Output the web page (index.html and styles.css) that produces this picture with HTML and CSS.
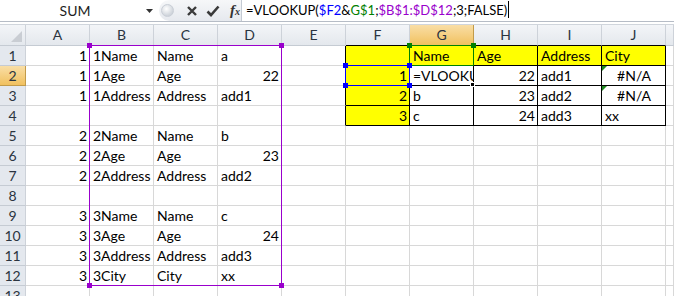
FILE: index.html
```html
<!DOCTYPE html>
<html lang="en">
<head>
    <meta charset="UTF-8">
    <title>Sheet1</title>
    <link rel="stylesheet" href="styles.css">
</head>
<body>
    <div class="formula-bar">
        <div class="name-box">
            <span class="name-text">SUM</span>
            <svg class="dd" width="7" height="4" viewBox="0 0 7 4"><path d="M0 0h7L3.5 4z" fill="#333"/></svg>
        </div>
        <div class="fx-buttons">
            <span class="grip"></span>
            <svg class="btn" width="12" height="12" viewBox="0 0 12 12"><path d="M2 2l8 8M10 2l-8 8" stroke="#3a3a3a" stroke-width="2.4"/></svg>
            <svg class="btn" width="14" height="12" viewBox="0 0 14 12"><path d="M1.5 6.5l3.5 3.5 7.5-8.5" stroke="#3a3a3a" stroke-width="2.6" fill="none"/></svg>
            <span class="fx">f<small>x</small></span>
        </div>
        <div class="formula">=VLOOKUP(<span class="ref-blue">$F2</span>&amp;<span class="ref-green">G$1</span>;<span class="ref-purple">$B$1:$D$12</span>;3;FALSE)<span class="caret"></span></div>
    </div>
    <div class="strip"></div>
    <div class="sheet" id="sheet">
        <!-- cells filled by script -->
        <div class="range purple"><i class="tl"></i><i class="tr"></i><i class="bl"></i><i class="br"></i></div>
        <div class="range green"><i class="tl"></i><i class="tr"></i></div>
        <div class="range blue"><i class="tl"></i><i class="tr"></i><i class="bl"></i><i class="br"></i></div>
        <div class="fill-handle"></div>
    </div>
    <script>
        const cols = ['A', 'B', 'C', 'D', 'E', 'F', 'G', 'H', 'I', 'J', ''];
        // row -> values for A..J (numbers are right aligned)
        const data = {
            1: [1, '1Name', 'Name', 'a', '', '', 'Name', 'Age', 'Address', 'City'],
            2: [1, '1Age', 'Age', 22, '', 1, '=VLOOKUP', 22, 'add1', '#N/A'],
            3: [1, '1Address', 'Address', 'add1', '', 2, 'b', 23, 'add2', '#N/A'],
            4: ['', '', '', '', '', 3, 'c', 24, 'add3', 'xx'],
            5: [2, '2Name', 'Name', 'b'],
            6: [2, '2Age', 'Age', 23],
            7: [2, '2Address', 'Address', 'add2'],
            9: [3, '3Name', 'Name', 'c'],
            10: [3, '3Age', 'Age', 24],
            11: [3, '3Address', 'Address', 'add3'],
            12: [3, '3City', 'City', 'xx']
        };

        function addCell(sheet, cls, text) {
            const cell = document.createElement('div');
            cell.className = cls;
            cell.textContent = text;
            sheet.appendChild(cell);
            return cell;
        }

        function buildSheet() {
            const sheet = document.getElementById('sheet');
            const first = sheet.firstElementChild;
            const frag = document.createDocumentFragment();

            addCell(frag, 'corner', '');
            cols.forEach((c, i) => {
                let cls = 'col-head';
                if (c === 'G') cls += ' active';
                if (i >= 5 && i <= 9) cls += ' edge-b';
                addCell(frag, cls, c);
            });

            for (let r = 1; r <= 13; r++) {
                addCell(frag, 'row-head' + (r === 2 ? ' active' : ''), r);
                const vals = data[r] || [];
                cols.forEach((c, i) => {
                    const v = vals[i] === undefined ? '' : vals[i];
                    let cls = 'cell';
                    if (typeof v === 'number') cls += ' num';
                    if (v === '#N/A') cls += ' err';
                    if (r <= 4) {
                        if (i === 4) cls += ' edge-r';
                        if (i >= 5 && i <= 9) cls += ' boxed';
                        if (i === 5 || (r === 1 && i >= 5 && i <= 9)) cls += ' yellow';
                        if (r === 4 && i >= 5 && i <= 9) cls += ' edge-b';
                    }
                    if (r === 2 && i === 6) cls += ' editing';
                    const cell = addCell(frag, cls, v);
                    if (v === '#N/A') cell.insertAdjacentHTML('afterbegin', '<span class="tri"></span>');
                });
            }
            sheet.insertBefore(frag, first);
        }

        buildSheet();
    </script>
</body>
</html>
```

FILE: styles.css
```css
body {
    margin: 0;
    font-family: 'Lato', 'Liberation Sans', sans-serif;
    font-size: 14px;
    color: #000;
    background: #fff;
    overflow: hidden;
}
.formula-bar {
    display: flex;
    height: 21px;
    border-bottom: 1px solid #b6bcc6;
    background: #fff;
}
.name-box {
    width: 159px;
    display: flex;
    align-items: center;
    box-sizing: border-box;
    padding-right: 6px;
}
.name-text {
    flex: 1;
    text-align: center;
    color: #1e1e1e;
    padding-left: 4px;
}
.fx-buttons {
    width: 83px;
    display: flex;
    align-items: center;
    background: linear-gradient(#f6f7f9, #e6e9ee);
    border-radius: 11px 0 0 11px;
    border-right: 1px solid #c4cad3;
    box-sizing: border-box;
    padding-left: 2px;
}
.grip {
    width: 11px;
    height: 11px;
    border-radius: 50%;
    background: radial-gradient(circle at 40% 35%, #ffffff, #cfd4db 70%);
    border: 1px solid #c9ced6;
    margin-right: 12px;
}
.btn {
    margin-right: 8px;
}
.fx {
    font-family: 'Liberation Serif', serif;
    font-style: italic;
    font-weight: bold;
    font-size: 15px;
    color: #333;
    margin-left: 2px;
}
.fx small {
    font-size: 10px;
}
.formula {
    flex: 1;
    padding-left: 4px;
    line-height: 20px;
    font-size: 13px;
    white-space: nowrap;
    color: #000;
}
.ref-blue { color: #0000ff; }
.ref-green { color: #008000; }
.ref-purple { color: #9900cc; }
.caret {
    display: inline-block;
    width: 1px;
    height: 17px;
    background: #000;
    vertical-align: -3px;
    margin-left: 1px;
}
.strip {
    height: 2px;
    background: #fff;
    border-bottom: 1px solid #d0d5dc;
}
.sheet {
    position: relative;
    display: grid;
    grid-template-columns: 26px repeat(10, 64px) 1fr;
    grid-template-rows: 21px repeat(13, 20px);
}
.sheet > div {
    box-sizing: border-box;
}
.corner, .col-head, .row-head {
    background: linear-gradient(#f3f5f8, #e4e8ed);
    border-right: 1px solid #cdd2d9;
    border-bottom: 1px solid #c5cbd3;
    color: #2b3440;
    text-align: center;
    line-height: 20px;
}
.row-head {
    background: #e4e8ee;
    line-height: 19px;
}
.corner {
    position: relative;
}
.corner::after {
    content: '';
    position: absolute;
    right: 3px;
    bottom: 3px;
    border-left: 11px solid transparent;
    border-bottom: 11px solid #c9cdd3;
}
.col-head.active, .row-head.active {
    background: linear-gradient(#f9dea6, #f1c15f);
    border-color: #c29b4a;
}
.cell {
    border-right: 1px solid #d8d8d8;
    border-bottom: 1px solid #d8d8d8;
    padding: 0 2px 0 3px;
    line-height: 19px;
    white-space: nowrap;
    overflow: hidden;
    position: relative;
}
.num {
    text-align: right;
}
.err {
    text-align: center;
}
.yellow {
    background: #ffff00;
}
.boxed {
    border-color: #000;
}
.edge-r {
    border-right-color: #000;
}
.col-head.edge-b, .cell.edge-b {
    border-bottom-color: #000;
}
.editing {
    border-top: 1px solid #e8a0e0;
    margin-top: -1px;
}
.tri {
    position: absolute;
    left: 0;
    top: 0;
    border-top: 5px solid #1f8a1f;
    border-right: 5px solid transparent;
}
.range {
    position: absolute;
    box-sizing: border-box;
}
.range i {
    position: absolute;
    width: 5px;
    height: 5px;
}
.range .tl { left: -3px; top: -3px; }
.range .tr { right: -3px; top: -3px; }
.range .bl { left: -3px; bottom: -3px; }
.range .br { right: -3px; bottom: -3px; }
.purple {
    left: 89px;
    top: 20px;
    width: 193px;
    height: 241px;
    border: 1px solid #9900cc;
}
.purple i { background: #9900cc; }
.green {
    left: 409px;
    top: 20px;
    width: 65px;
    height: 21px;
    border: 1px solid #008000;
}
.green i { background: #008000; }
.blue {
    left: 345px;
    top: 40px;
    width: 65px;
    height: 21px;
    border: 1px solid #0000ff;
}
.blue i { background: #0000ff; }
.fill-handle {
    position: absolute;
    left: 470px;
    top: 57px;
    width: 5px;
    height: 5px;
    background: #000;
    border: 1px solid #fff;
}
```
